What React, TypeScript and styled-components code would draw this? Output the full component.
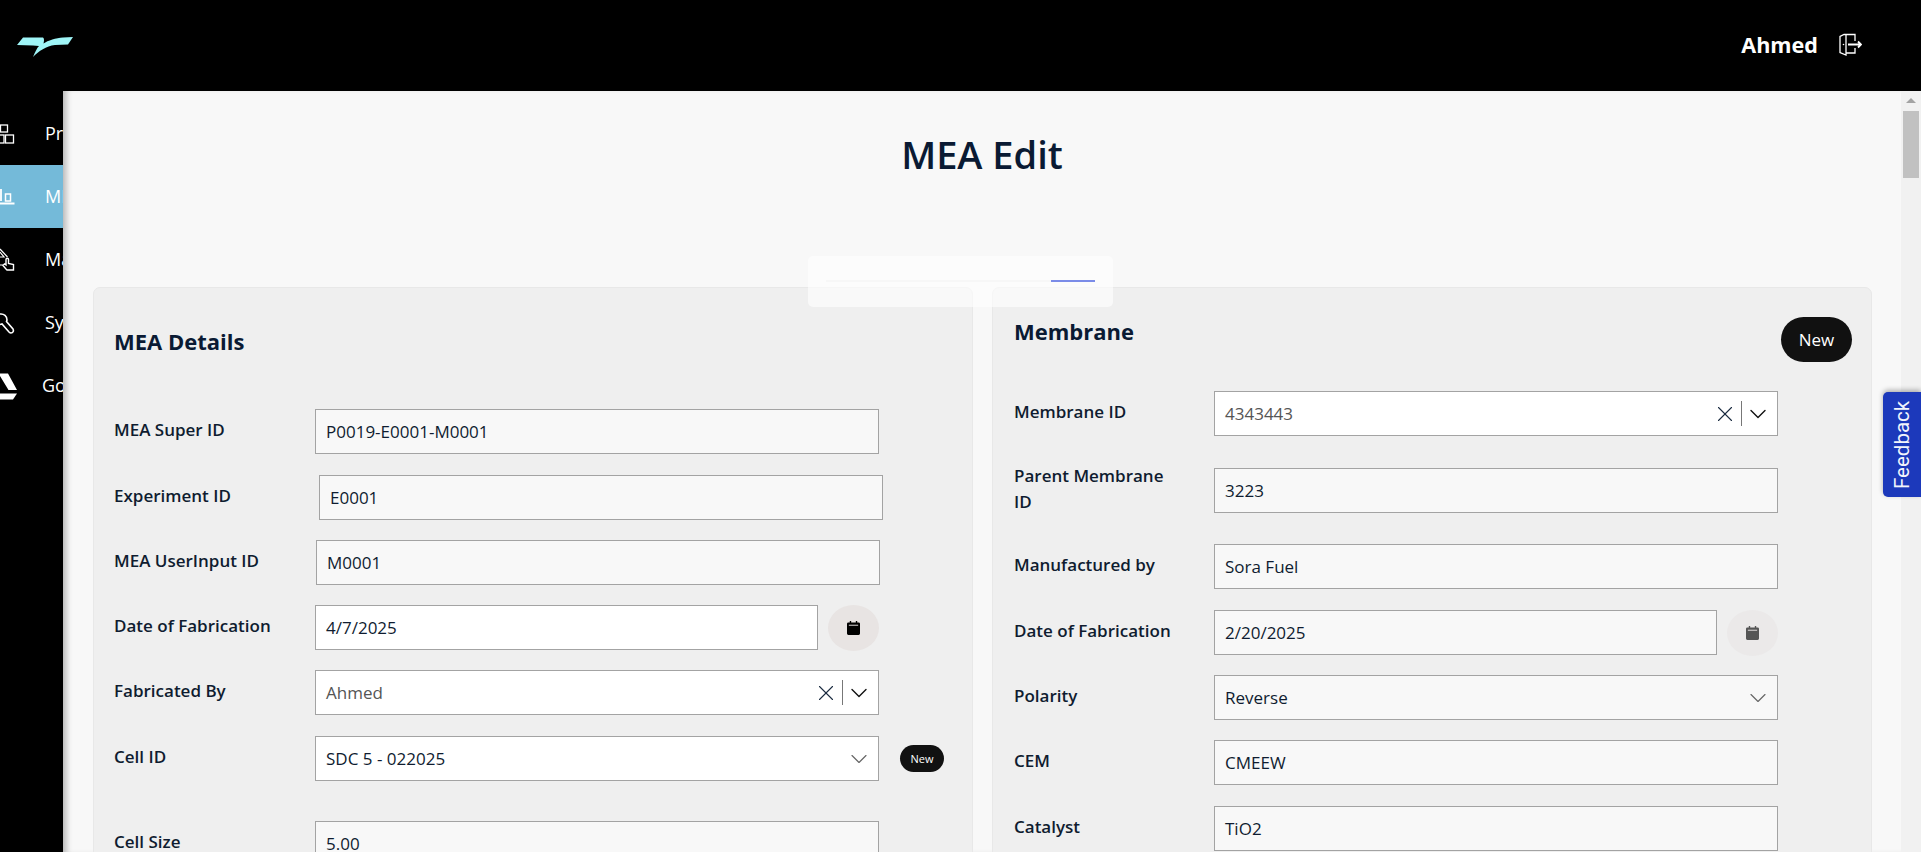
import React from "react";
import styled, { createGlobalStyle } from "styled-components";
import { X, ChevronDown } from "lucide-react";

const Global = createGlobalStyle`
  html, body { margin: 0; padding: 0; height: 100%; overflow: hidden; background: #000; }
  #root { height: 100%; }
  * { box-sizing: border-box; }
`;
const Shell = styled.div`
  height: 852px; display: grid; grid-template-columns: 63px 1fr; grid-template-rows: 91px 1fr;
  font-family: "Open Sans", "Noto Sans", sans-serif; color: #0a1a33; position: relative; overflow: hidden;
`;
const TopBar = styled.header`
  grid-column: 1 / 3; background: #000; display: flex; align-items: center; padding: 0 59px 0 17px;
`;
const Logo = styled.svg`width: 57px; height: 22px; margin-top: 3px;`;
const UserName = styled.span`margin-left: auto; color: #fff; font-size: 21.6px; font-weight: 700; margin-top: -2px;`;
const Exit = styled.svg`width: 23px; height: 23px; margin-left: 21px; margin-top: -3px;`;
const Side = styled.nav`background: #000; overflow: hidden; padding-top: 11px; width: 63px;`;
const NavItem = styled.div<{ $active?: boolean }>`
  height: 63px; width: 63px; display: flex; align-items: center; white-space: nowrap; overflow: hidden;
  background: ${p => (p.$active ? "#74bad9" : "transparent")}; color: #fff; font-size: 18px;
`;
const NavText = styled.span<{ $x?: number }>`margin-left: ${p => p.$x ?? 31}px; margin-top: -2px;`;
const NavIcon = styled.svg`width: 28px; height: 28px; margin-left: -14px; flex: none; overflow: visible;`;
const Main = styled.main`
  display: flex; min-width: 0; min-height: 0; background: #f8f8f8; box-shadow: inset 7px 0 6px -4px rgba(0,0,0,.28); position: relative;
`;
const Content = styled.div`flex: 1; min-width: 0; overflow: hidden; padding: 0 30px; position: relative;`;
const Title = styled.h1`margin: 0; height: 196px; padding-top: 35px; text-align: center; font-size: 38px; line-height: 56px; font-weight: 600;`;
const Columns = styled.div`display: grid; grid-template-columns: 880px 880px; column-gap: 19px;`;
const Panel = styled.section`
  background: #efefef; border: 1px solid #e8e8e8; border-radius: 7px; height: 900px; padding: 0 20px;
`;
const PanelHeadLeft = styled.h2`margin: 0; height: 121px; padding-top: 38px; font-size: 22px; line-height: 30px; font-weight: 700;`;
const PanelHeadRight = styled.div`height: 103px; display: flex; justify-content: space-between; padding-top: 28px;`;
const PanelTitle = styled.h2`margin: 0; font-size: 22px; line-height: 30px; font-weight: 700; padding-left: 1px;`;
const NewBig = styled.button`
  width: 71px; height: 45px; border: 0; border-radius: 23px; background: #111; color: #fff; font: 400 17px "Open Sans", sans-serif; margin: 1px -1px 0 0;
`;
const NewSmall = styled.button`
  width: 44px; height: 27px; border: 0; border-radius: 14px; background: #111; color: #fff; font: 400 11px "Open Sans", sans-serif; padding: 0; margin-left: 21px;
`;
const Row = styled.div<{ $h?: number; $gap?: number }>`
  display: grid; grid-template-columns: 201px 564px 1fr; grid-template-rows: 100%; align-items: center;
  height: ${p => p.$h ?? 45}px; margin-bottom: ${p => p.$gap ?? 20}px;
`;
const RightRow = styled(Row)`padding-left: 1px; grid-template-columns: 200px 564px 1fr;`;
const Label = styled.label`font-size: 17px; font-weight: 600; line-height: 26px; color: #0f1c30; padding-right: 40px; margin-top: -3px;`;
const Field = styled.div<{ $white?: boolean; $offset?: number }>`
  height: 45px; border: 1px solid #a3a3a3; background: ${p => (p.$white ? "#fff" : "#f8f8f8")};
  padding: 0 10px; display: flex; align-items: center; font-size: 17px; color: #0f1c30; min-width: 0;
  margin-left: ${p => p.$offset ?? 0}px; margin-right: -${p => p.$offset ?? 0}px;
`;
const Muted = styled.span`color: #555;`;
const Actions = styled.span`margin-left: auto; margin-right: -5px; display: flex; align-items: center; color: #222;`;
const Divider = styled.span`width: 1px; height: 25px; background: #777; margin: 0 2px 0 3px;`;
const DateWrap = styled.div`display: flex; gap: 10px; align-items: center;`;
const DateField = styled(Field)`flex: 1;`;
const CalBtn = styled.span<{ $dim?: boolean }>`
  width: 51px; height: 46px; border-radius: 50%; flex: none; display: flex; align-items: center; justify-content: center;
  background: ${p => (p.$dim ? "#ebe9e9" : "#e8e4e3")}; color: ${p => (p.$dim ? "#555" : "#000")};
`;
const Overlay = styled.div`
  position: absolute; left: 745px; top: 165px; width: 305px; height: 51px; background: rgba(255,255,255,.6); border-radius: 5px; z-index: 2;
`;
const TabLine = styled.div`
  position: absolute; left: 18px; right: 18px; top: 24px; height: 2px; background: rgba(0,0,0,.02);
`;
const TabInk = styled.div`position: absolute; right: 0; top: 0; width: 44px; height: 2px; background: #7b8ce8;`;
const Track = styled.aside`
  width: 20px; flex: none; background: #f1f1f1; display: flex; flex-direction: column; align-items: center; padding-top: 7px;
`;
const Arrow = styled.div`width: 0; height: 0; border: 5px solid transparent; border-top: 0; border-bottom: 5px solid #a3a3a3; margin-bottom: 8px;`;
const Thumb = styled.div`width: 16px; height: 67px; background: #c1c1c1;`;
const Feedback = styled.div`
  position: absolute; right: 0; top: 392px; width: 38px; height: 105px; background: #1c39bb; color: #f2f4fc;
  border-radius: 0 5px 5px 0; writing-mode: vertical-rl; transform: rotate(180deg);
  display: flex; align-items: center; justify-content: center; font: 400 20.5px Roboto, sans-serif; box-shadow: 0 2px 5px rgba(0,0,0,.3); z-index: 3;
`;

const Calendar = () => (
  <svg width="13" height="14" viewBox="0 0 14 15" fill="currentColor">
    <path d="M3 0h1.500v1.500h5V0H11v1.500h1.500A1.500 1.500 0 0 1 14 3v10.500a1.500 1.500 0 0 1-1.500 1.500h-11A1.500 1.500 0 0 1 0 13.500V3a1.500 1.500 0 0 1 1.500-1.500H3z" />
    <rect x="2" y="4" width="10" height="1" fill="#e8e4e3" />
  </svg>
);
const Clear = () => <X size={26} strokeWidth={1} color="#1a2b40" />;
const Chev = ({ dark }: { dark?: boolean }) => <ChevronDown size={28} strokeWidth={dark ? 1.2 : 1} color={dark ? "#111" : "#666"} />;

export default function App() {
  return (
    <Shell>
      <Global />
      <TopBar>
        <Logo viewBox="0 0 57 22">
          <path fill="#9ff5f7" d="M0 9 L6 1.500 L26 1.500 C27.500 2.500 27 5 26.500 7.500 C31 4.500 39 2 46 1.500 L56 1 L51 8.500 L38 9 C29 10 22 15 16 21 C18 16 20 12 22 10 L16 9.500 Z" />
        </Logo>
        <UserName>Ahmed</UserName>
        <Exit viewBox="0 0 23 23" fill="none" stroke="#fff" strokeWidth="1.300">
          <path d="M16 8V1.500H5L1 3.500V19.500L7 22V2M7 20H16V15" />
          <path d="M9 11.500H22M19 8.500l3 3-3 3" strokeWidth="1.800" />
          <circle cx="4.500" cy="11.500" r="0.800" fill="#fff" stroke="none" />
        </Exit>
      </TopBar>
      <Side>
        <NavItem>
          <NavIcon viewBox="0 0 28 28" fill="none" stroke="#fff" strokeWidth="1.300">
            <rect x="14.500" y="5" width="7" height="7" /><rect x="10" y="15" width="8" height="8" /><rect x="19.500" y="15" width="8" height="8" />
          </NavIcon>
          <NavText>Projects</NavText>
        </NavItem>
        <NavItem $active>
          <NavIcon viewBox="0 0 28 28" fill="none" stroke="#fff" strokeWidth="1.500">
            <path d="M4 20.500H28.500M15 6V18" strokeWidth="1.800" />
            <rect x="19.500" y="11" width="5" height="7" />
          </NavIcon>
          <NavText>MEA</NavText>
        </NavItem>
        <NavItem>
          <NavIcon viewBox="0 0 28 28" fill="none" stroke="#fff" strokeWidth="1.200">
            <path d="M14 3L21.500 11M14 6L18 11H14M14 19H17" />
            <path d="M20 23L17 19.500L18.500 18L20 19V13.500a1.200 1.200 0 0 1 2.500 0V17.500L27.500 18.500V24H21z" strokeWidth="1.400" />
          </NavIcon>
          <NavText>Materials</NavText>
        </NavItem>
        <NavItem>
          <NavIcon viewBox="0 0 28 28" fill="none" stroke="#fff" strokeWidth="1.600">
            <path d="M14 5C18 4.500 21 7 21 11L20.500 12.500L27 20C28 22 27 24 25 24C24 24 23.500 23.500 23 23L16 15L14 15.500" />
          </NavIcon>
          <NavText>System</NavText>
        </NavItem>
        <NavItem>
          <NavIcon viewBox="0 0 28 28" fill="#fff">
            <path d="M6 1.500H22L31 18H22.500L14 4z" />
            <path d="M10 21.500H31L27 27.500H6z" />
            <path d="M6 6L10 13L4 24L0 18z" />
          </NavIcon>
          <NavText $x={28}>Google Drive</NavText>
        </NavItem>
      </Side>
      <Main>
        <Content>
          <Title>MEA Edit</Title>
          <Overlay><TabLine><TabInk /></TabLine></Overlay>
          <Columns>
            <Panel>
              <PanelHeadLeft>MEA Details</PanelHeadLeft>
              <Row $gap={20}><Label>MEA Super ID</Label><Field>P0019-E0001-M0001</Field></Row>
              <Row $h={46} $gap={20}><Label>Experiment ID</Label><Field $offset={4}>E0001</Field></Row>
              <Row $gap={20}><Label>MEA UserInput ID</Label><Field $offset={1}>M0001</Field></Row>
              <Row $gap={20}><Label>Date of Fabrication</Label><DateWrap><DateField $white>4/7/2025</DateField><CalBtn><Calendar /></CalBtn></DateWrap></Row>
              <Row $gap={21}><Label>Fabricated By</Label><Field $white><Muted>Ahmed</Muted><Actions><Clear /><Divider /><Chev dark /></Actions></Field></Row>
              <Row $gap={40}><Label>Cell ID</Label><Field $white>SDC 5 - 022025<Actions><Chev /></Actions></Field><NewSmall>New</NewSmall></Row>
              <Row><Label>Cell Size</Label><Field>5.00</Field></Row>
            </Panel>
            <Panel>
              <PanelHeadRight><PanelTitle>Membrane</PanelTitle><NewBig>New</NewBig></PanelHeadRight>
              <RightRow $gap={32}><Label>Membrane ID</Label><Field $white><Muted>4343443</Muted><Actions><Clear /><Divider /><Chev dark /></Actions></Field></RightRow>
              <RightRow $gap={31}><Label>Parent Membrane ID</Label><Field>3223</Field></RightRow>
              <RightRow $gap={21}><Label>Manufactured by</Label><Field>Sora Fuel</Field></RightRow>
              <RightRow $gap={20}><Label>Date of Fabrication</Label><DateWrap><DateField>2/20/2025</DateField><CalBtn $dim><Calendar /></CalBtn></DateWrap></RightRow>
              <RightRow $gap={20}><Label>Polarity</Label><Field>Reverse<Actions><Chev /></Actions></Field></RightRow>
              <RightRow $gap={21}><Label>CEM</Label><Field>CMEEW</Field></RightRow>
              <RightRow><Label>Catalyst</Label><Field>TiO2</Field></RightRow>
            </Panel>
          </Columns>
        </Content>
        <Track><Arrow /><Thumb /></Track>
      </Main>
      <Feedback>Feedback</Feedback>
    </Shell>
  );
}
